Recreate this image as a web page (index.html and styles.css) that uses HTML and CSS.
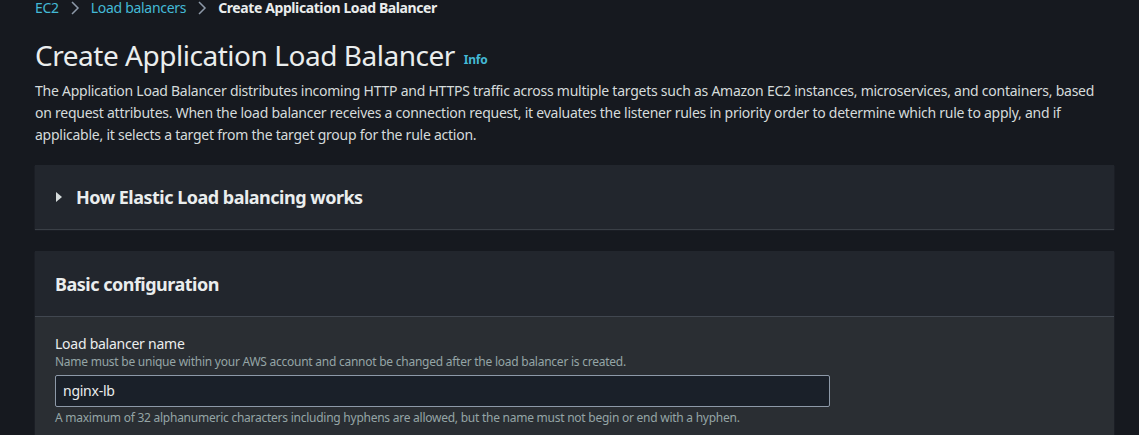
FILE: index.html
```html
<!DOCTYPE html>
<html lang="en">
<head>
<meta charset="utf-8">
<link rel="stylesheet" href="styles.css">
</head>
<body>
<div class="page">
  <nav class="crumbs">
    <a class="crumb-link">EC2</a>
    <svg class="chev" viewBox="0 0 10 16" width="10" height="16"><path d="M2 2l6 6-6 6" fill="none" stroke="#8d99a8" stroke-width="1.5"/></svg>
    <a class="crumb-link">Load balancers</a>
    <svg class="chev" viewBox="0 0 10 16" width="10" height="16"><path d="M2 2l6 6-6 6" fill="none" stroke="#8d99a8" stroke-width="1.5"/></svg>
    <span class="crumb-current">Create Application Load Balancer</span>
  </nav>
  <h1 class="title">Create Application Load Balancer <span class="info">Info</span></h1>
  <p class="desc">The Application Load Balancer distributes incoming HTTP and HTTPS traffic across multiple targets such as Amazon EC2 instances, microservices, and containers, based on request attributes. When the load balancer receives a connection request, it evaluates the listener rules in priority order to determine which rule to apply, and if applicable, it selects a target from the target group for the rule action.</p>

  <section class="panel expander">
    <svg class="caret" viewBox="0 0 8 12" width="8" height="12"><path d="M1 1l6 5-6 5z" fill="#d5dbdb"/></svg>
    <h2 class="panel-title">How Elastic Load balancing works</h2>
  </section>

  <section class="panel config">
    <header class="config-head">
      <h2 class="panel-title">Basic configuration</h2>
    </header>
    <div class="config-body">
      <label class="field-label">Load balancer name</label>
      <div class="field-desc">Name must be unique within your AWS account and cannot be changed after the load balancer is created.</div>
      <div class="input">nginx-lb</div>
      <div class="field-hint">A maximum of 32 alphanumeric characters including hyphens are allowed, but the name must not begin or end with a hyphen.</div>
    </div>
  </section>
</div>
</body>
</html>
```
FILE: styles.css
```css
html, body {
  margin: 0;
  background: #16191f;
  height: 100%;
  overflow: hidden;
}
.page {
  padding: 0 25px 0 35px;
  font-family: "Noto Sans", sans-serif;
  color: #d5dbdb;
}
.crumbs {
  display: flex;
  align-items: center;
  gap: 11px;
  height: 16px;
  font-size: 14px;
  line-height: 16px;
  letter-spacing: -0.3px;
}
.crumb-link { color: #44b9d6; }
.crumb-current { color: #eaeded; font-weight: 700; letter-spacing: -0.4px; }
.chev { display: block; }
.title {
  margin: 21px 0 0;
  font-size: 28px;
  line-height: 36px;
  font-weight: 400;
  color: #eaeded;
  letter-spacing: -0.47px;
}
.info {
  font-size: 12px;
  font-weight: 700;
  color: #44b9d6;
  vertical-align: 2px;
  margin-left: 2px;
  letter-spacing: -0.2px;
}
.desc {
  margin: 2px 0 0;
  font-size: 14px;
  line-height: 22px;
  color: #d5dbdb;
  letter-spacing: -0.25px;
}
.panel {
  background: #22262d;
  box-shadow: 0 1px 1px 0 #3a3f46;
}
.expander {
  margin-top: 19px;
  height: 64px;
  display: flex;
  align-items: center;
  padding: 0 20px;
  gap: 13px;
}
.caret { display: block; }
.panel-title {
  margin: 0;
  font-size: 18px;
  font-weight: 700;
  line-height: 22px;
  color: #eaeded;
  letter-spacing: -0.5px;
}
.config {
  margin-top: 22px;
  background: #2a2e33;
}
.config-head {
  background: #22262d;
  height: 65px;
  display: flex;
  align-items: center;
  padding: 0 20px;
  border-bottom: 1px solid #414750;
}
.config-body {
  padding: 17px 20px 20px;
}
.field-label {
  display: block;
  font-size: 14px;
  line-height: 20px;
  color: #eaeded;
  letter-spacing: -0.25px;
}
.field-desc, .field-hint {
  font-size: 12px;
  line-height: 16px;
  color: #95a5a6;
  letter-spacing: -0.25px;
}
.input {
  margin-top: 5px;
  width: 759px;
  height: 30px;
  border: 1px solid #8d99a8;
  border-radius: 2px;
  background: #1a2029;
  box-sizing: content-box;
  padding: 0 7px;
  font-size: 14px;
  line-height: 30px;
  color: #eaeded;
  letter-spacing: -0.25px;
}
.field-hint { margin-top: 3px; }
```
